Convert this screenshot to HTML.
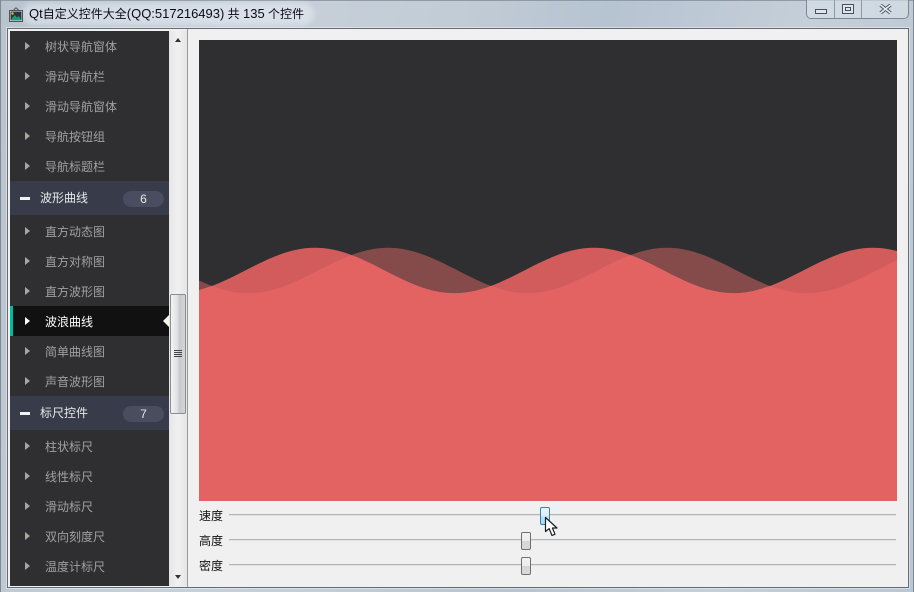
<!DOCTYPE html>
<html>
<head>
<meta charset="utf-8">
<style>
html,body{margin:0;padding:0;}
body{width:914px;height:592px;overflow:hidden;position:relative;background:linear-gradient(100deg,#b8c3cd 0%,#c8d1da 25%,#c2ccd6 45%,#b6c3d1 60%,#c5cfd9 80%,#b9c6d4 100%);font-family:"Liberation Sans","Noto Sans CJK SC",sans-serif;font-size:12px;}
div{position:absolute;box-sizing:border-box;}
.t{white-space:nowrap;line-height:16px;}
.t span{font-size:13px;}
.item{left:45px;width:110px;color:#a0a0a0;height:16px;}
.arr{width:0;height:0;left:25px;border-left:5px solid #a8a6a0;border-top:4.5px solid transparent;border-bottom:4.5px solid transparent;}
.hdr{left:10px;width:159px;background:#383b49;}
.hdr .name{left:30px;top:9px;color:#e8e8e8;}
.hdr .dash{left:10px;top:16px;width:10px;height:3px;background:#f2f2f2;}
.hdr .badge{left:113px;top:10px;width:41px;height:16px;border-radius:8px;background:#4a4d5f;color:#e8e8e8;text-align:center;line-height:16px;}
.track{left:229px;width:667px;height:1px;background:#b4b4b4;box-shadow:0 1px 0 #e2e2e2;}
.handle{width:10px;height:18px;border:1px solid #6f6f6f;border-radius:2px;background:linear-gradient(180deg,#f4f4f4 0%,#ececec 48%,#d6d6d6 52%,#d9d9d9 100%);}
.lbl{left:199px;color:#111;}
.g{height:1px;left:174px;width:8px;background:#444;}
</style>
</head>
<body>
<!-- title bar -->
<div style="left:0;top:0;width:914px;height:1px;background:#8f9aa6"></div>
<div style="left:0;top:0;width:1px;height:592px;background:#7f8a96"></div>
<div style="left:913px;top:0;width:1px;height:592px;background:#7f8a96"></div>
<div style="left:22px;top:3px;width:292px;height:22px;border-radius:11px;background:rgba(235,240,245,.5);filter:blur(3px);"></div>
<svg style="position:absolute;left:9px;top:7px" width="14" height="15" viewBox="0 0 14 15">
<path d="M4.5 3 7 .8 9.5 3" fill="none" stroke="#555" stroke-width="1"/>
<rect x="0.5" y="3.5" width="13" height="11" fill="#e8e8e8" stroke="#4a5560"/>
<rect x="1.5" y="4.5" width="11" height="9" fill="#2b3340"/>
<circle cx="3.5" cy="6.5" r="1.2" fill="#e8c23a"/>
<path d="M1.5 13.5 5.5 8 8 10.5 10 9 12.5 13.5Z" fill="#1f9a6e"/>
</svg>
<div class="t" style="left:29px;top:6px;color:#0a0a18;"><span>Qt</span>自定义控件大全<span>(QQ:517216493)</span> 共 <span>135</span> 个控件</div>
<!-- window buttons -->
<div style="left:806px;top:0;width:103px;height:19px;background:rgba(215,224,232,.65);border:1px solid #7c8894;border-top:none;border-radius:0 0 5px 5px;"></div>
<div style="left:834px;top:0;width:1px;height:18px;background:#8e99a5"></div>
<div style="left:861px;top:0;width:1px;height:18px;background:#8e99a5"></div>
<div style="left:815px;top:9px;width:12px;height:5px;border:1px solid #45505c;background:#dfe5ea"></div>
<div style="left:842px;top:4px;width:12px;height:10px;border:1px solid #45505c;background:#dfe5ea"></div>
<div style="left:845px;top:7px;width:6px;height:4px;border:1px solid #45505c;"></div>
<svg style="position:absolute;left:879px;top:4px" width="13" height="10" viewBox="0 0 13 10"><path d="M1.5 1 11.5 9M11.5 1 1.5 9" stroke="#45505c" stroke-width="3.4"/><path d="M1.5 1 11.5 9M11.5 1 1.5 9" stroke="#e8edf1" stroke-width="1.6"/></svg>
<!-- client -->
<div style="left:7px;top:28px;width:902px;height:560px;background:#f0f0f0;border:1px solid #666c74;box-shadow:0 0 0 1px rgba(255,255,255,.4);"></div>
<div style="left:8px;top:29px;width:180px;height:558px;background:#f0f0f0;border-right:1px solid #9a9a9a;"></div>
<!-- sidebar -->
<div style="left:10px;top:31px;width:159px;height:555px;background:#2f2f31;"></div>
<div class="arr" style="top:42px"></div><div class="t item" style="top:39px">树状导航窗体</div>
<div class="arr" style="top:72px"></div><div class="t item" style="top:69px">滑动导航栏</div>
<div class="arr" style="top:102px"></div><div class="t item" style="top:99px">滑动导航窗体</div>
<div class="arr" style="top:132px"></div><div class="t item" style="top:129px">导航按钮组</div>
<div class="arr" style="top:162px"></div><div class="t item" style="top:159px">导航标题栏</div>
<div class="hdr" style="top:181px;height:34px"><div class="dash"></div><div class="t name">波形曲线</div><div class="badge">6</div></div>
<div class="arr" style="top:227px"></div><div class="t item" style="top:224px">直方动态图</div>
<div class="arr" style="top:257px"></div><div class="t item" style="top:254px">直方对称图</div>
<div class="arr" style="top:287px"></div><div class="t item" style="top:284px">直方波形图</div>
<div style="left:10px;top:306px;width:159px;height:30px;background:#111112;"></div>
<div style="left:10px;top:306px;width:3px;height:30px;background:#00bb9e;"></div>
<div class="arr" style="top:317px;border-left-color:#fff"></div><div class="t item" style="top:314px;color:#fff">波浪曲线</div>
<div style="left:163px;top:315px;width:0;height:0;border-right:6px solid #f5f5e8;border-top:6px solid transparent;border-bottom:6px solid transparent;"></div>
<div class="arr" style="top:347px"></div><div class="t item" style="top:344px">简单曲线图</div>
<div class="arr" style="top:377px"></div><div class="t item" style="top:374px">声音波形图</div>
<div class="hdr" style="top:396px;height:34px"><div class="dash"></div><div class="t name">标尺控件</div><div class="badge">7</div></div>
<div class="arr" style="top:442px"></div><div class="t item" style="top:439px">柱状标尺</div>
<div class="arr" style="top:472px"></div><div class="t item" style="top:469px">线性标尺</div>
<div class="arr" style="top:502px"></div><div class="t item" style="top:499px">滑动标尺</div>
<div class="arr" style="top:532px"></div><div class="t item" style="top:529px">双向刻度尺</div>
<div class="arr" style="top:562px"></div><div class="t item" style="top:559px">温度计标尺</div>
<!-- scrollbar -->
<div style="left:169px;top:31px;width:18px;height:555px;background:linear-gradient(90deg,#e4e5e6,#f1f1f1 50%,#e4e5e6);"></div>
<div style="left:175px;top:38px;width:0;height:0;border-bottom:4px solid #333;border-left:3.5px solid transparent;border-right:3.5px solid transparent;"></div>
<div style="left:175px;top:575px;width:0;height:0;border-top:4px solid #333;border-left:3.5px solid transparent;border-right:3.5px solid transparent;"></div>
<div style="left:170px;top:294px;width:16px;height:120px;border:1px solid #8a8e92;border-radius:2px;background:linear-gradient(90deg,#f2f3f4,#dfe1e4 45%,#c6c9cd 60%,#d4d6d9);"></div>
<div class="g" style="top:350px"></div><div class="g" style="top:352px"></div><div class="g" style="top:354px"></div><div class="g" style="top:356px"></div>
<!-- chart -->
<svg style="position:absolute;left:0;top:0" width="914" height="592" viewBox="0 0 914 592">
<defs>
<clipPath id="area"><rect x="199" y="40" width="698" height="461"/></clipPath>
<clipPath id="w1"><path d="M36 247.8C86.8 247.8 124.7 293.2 175.5 293.2S264.2 247.8 315 247.8S403.7 293.2 454.5 293.2S543.2 247.8 594 247.8S682.7 293.2 733.5 293.2S822.2 247.8 873 247.8S961.7 293.2 1012.5 293.2V501H36Z"/></clipPath>
</defs>
<g clip-path="url(#area)">
<rect x="199" y="40" width="698" height="461" fill="#2f2f31"/>
<path d="M109 247.8C159.8 247.8 197.7 293.2 248.5 293.2S337.2 247.8 388 247.8S476.7 293.2 527.5 293.2S616.2 247.8 667 247.8S755.7 293.2 806.5 293.2S895.2 247.8 946 247.8V501H109Z" fill="#854a4a"/>
<path d="M36 247.8C86.8 247.8 124.7 293.2 175.5 293.2S264.2 247.8 315 247.8S403.7 293.2 454.5 293.2S543.2 247.8 594 247.8S682.7 293.2 733.5 293.2S822.2 247.8 873 247.8S961.7 293.2 1012.5 293.2V501H36Z" fill="#d25c5c"/>
<g clip-path="url(#w1)">
<path d="M109 247.8C159.8 247.8 197.7 293.2 248.5 293.2S337.2 247.8 388 247.8S476.7 293.2 527.5 293.2S616.2 247.8 667 247.8S755.7 293.2 806.5 293.2S895.2 247.8 946 247.8V501H109Z" fill="#e36363"/>
</g>
</g>
</svg>
<!-- sliders -->
<div class="t lbl" style="top:508px">速度</div>
<div class="t lbl" style="top:533px">高度</div>
<div class="t lbl" style="top:558px">密度</div>
<div class="track" style="top:514px"></div>
<div class="track" style="top:539px"></div>
<div class="track" style="top:564px"></div>
<div class="handle" style="left:540px;top:507px;border-color:#3c7fb1;background:linear-gradient(180deg,#eaf6fd 0%,#d9f0fc 48%,#bee6fd 52%,#a7d9f5 100%);"></div>
<div class="handle" style="left:521px;top:532px"></div>
<div class="handle" style="left:521px;top:557px"></div>
<!-- cursor -->
<svg style="position:absolute;left:544px;top:516px" width="15" height="22" viewBox="0 0 15 22">
<path d="M1.5 1.5V15.5L5.2 12.6 8 19.5 11 18.2 8.4 12H13Z" fill="#fff" stroke="#1c1f24" stroke-width="1.2" stroke-linejoin="round"/>
</svg>
</body>
</html>
